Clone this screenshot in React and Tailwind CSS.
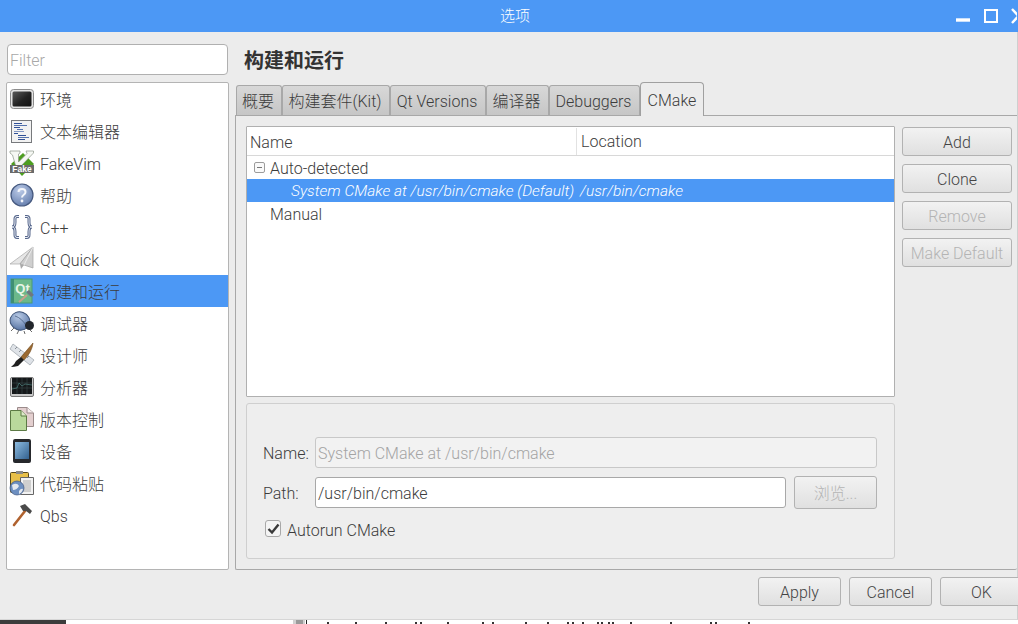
import React from "react";

function EnvIcon() {
  return (
    <svg width="26" height="26" viewBox="0 0 26 26">
      <defs>
        <linearGradient id="envScreen" x1="0" y1="0" x2="1" y2="1">
          <stop offset="0" stopColor="#5a5a5a" />
          <stop offset="0.55" stopColor="#222222" />
          <stop offset="1" stopColor="#111111" />
        </linearGradient>
      </defs>
      <rect x="1.5" y="3.5" width="23" height="19" rx="3" fill="#e4e4e4" stroke="#8c8c8c" />
      <rect x="3.5" y="5.5" width="19" height="15" rx="1.5" fill="url(#envScreen)" />
    </svg>
  );
}

function EditorIcon() {
  return (
    <svg width="26" height="26" viewBox="0 0 26 26">
      <rect x="2.5" y="2.5" width="20" height="22" fill="#f2f2f2" stroke="#77797c" />
      <g fill="#2f4f96">
        <rect x="5" y="5" width="8" height="1" />
        <rect x="5" y="7" width="13" height="1" fill="#5673ad" />
        <rect x="5" y="9" width="6" height="1" />
        <rect x="8" y="11" width="6" height="1" fill="#5673ad" />
        <rect x="5" y="13" width="10" height="1" fill="#8297c3" />
        <rect x="5" y="15" width="4" height="1" />
        <rect x="9" y="17" width="8" height="1" />
        <rect x="9" y="19" width="11" height="1" fill="#5673ad" />
        <rect x="9" y="21" width="7" height="1" />
      </g>
    </svg>
  );
}

function FakeVimIcon() {
  return (
    <svg width="26" height="26" viewBox="0 0 26 26">
      <path d="M14 3 L25 14 L13 26 L2 14Z" fill="#4d9e1f" />
      <path d="M1 1 H11 V3 L9.5 4 V12 L18 3.5 L17 1 H24.5 V3 L11 17 H7 L3.5 5 L1 3Z" fill="#f6f8f4" stroke="#8d968a" strokeWidth="0.7" />
      <rect x="1" y="15" width="24" height="8" fill="#6a6a6a" />
      <text x="13" y="22" textAnchor="middle" fontSize="8.5" fontWeight="700" fill="#ffffff" fontFamily="Liberation Sans, sans-serif">Fake</text>
    </svg>
  );
}

function HelpIcon() {
  return (
    <svg width="26" height="26" viewBox="0 0 26 26">
      <defs>
        <radialGradient id="helpBall" cx="0.4" cy="0.3" r="0.8">
          <stop offset="0" stopColor="#bccbe8" />
          <stop offset="1" stopColor="#5d77a8" />
        </radialGradient>
      </defs>
      <circle cx="13" cy="13" r="11" fill="url(#helpBall)" stroke="#46597f" strokeWidth="1.2" />
      <path d="M9.5 10 C9.5 6 16.5 6 16.5 10 C16.5 13 13 12.5 13 15.5" fill="none" stroke="#f4f6fb" strokeWidth="2" />
      <circle cx="13" cy="19" r="1.4" fill="#f4f6fb" />
    </svg>
  );
}

function CppIcon() {
  return (
    <svg width="26" height="26" viewBox="0 0 26 26" fill="none">
      <g stroke="#55658a" strokeWidth="3">
        <path d="M10 2.5 H8 C5.5 2.5 6 5 6 8 C6 11 5.5 13 3 13 C5.5 13 6 15 6 18 C6 21 5.5 23.5 8 23.5 H10" />
        <path d="M16 2.5 H18 C20.5 2.5 20 5 20 8 C20 11 20.5 13 23 13 C20.5 13 20 15 20 18 C20 21 20.5 23.5 18 23.5 H16" />
      </g>
      <g stroke="#e6ebf4" strokeWidth="1">
        <path d="M10 2.5 H8 C5.5 2.5 6 5 6 8 C6 11 5.5 13 3 13 C5.5 13 6 15 6 18 C6 21 5.5 23.5 8 23.5 H10" />
        <path d="M16 2.5 H18 C20.5 2.5 20 5 20 8 C20 11 20.5 13 23 13 C20.5 13 20 15 20 18 C20 21 20.5 23.5 18 23.5 H16" />
      </g>
    </svg>
  );
}

function QuickIcon() {
  return (
    <svg width="26" height="26" viewBox="0 0 26 26">
      <path d="M24 1 L1 18 L11 18Z" fill="#e6e6e6" stroke="#a8a8a8" strokeWidth="0.7" />
      <path d="M24 1 L11 18 L15 19 L24 22Z" fill="#cfcfcf" stroke="#a0a0a0" strokeWidth="0.7" />
      <path d="M11 18 L12 23 L15 19Z" fill="#a8a8a8" />
      <path d="M24 1 L15 19" stroke="#f4f4f4" strokeWidth="0.8" />
    </svg>
  );
}

function BuildIcon() {
  return (
    <svg width="26" height="26" viewBox="0 0 26 26">
      <rect x="2" y="1" width="21" height="24" fill="#6cb88a" stroke="#4a9a74" />
      <path d="M2 1 H5 V25 H2Z" fill="#3f8f73" />
      <text x="13.5" y="15" textAnchor="middle" fontSize="13" fontWeight="700" fill="#e8f5e6" fontFamily="Liberation Sans, sans-serif">Qt</text>
      <path d="M10 24 L18 17" stroke="#c8a08c" strokeWidth="2" />
      <path d="M17 14 L20 12 L25 17 L22 19Z" fill="#6f7780" />
    </svg>
  );
}

function DebugIcon() {
  return (
    <svg width="26" height="26" viewBox="0 0 26 26">
      <defs>
        <radialGradient id="bugBody" cx="0.35" cy="0.3" r="0.85">
          <stop offset="0" stopColor="#b9cbe6" />
          <stop offset="1" stopColor="#4c6a9c" />
        </radialGradient>
      </defs>
      <g stroke="#444444" strokeWidth="0.8">
        <path d="M5 18 L2 21 M10 20 L8 24 M15 21 L16 24 M20 19 L23 22" />
      </g>
      <ellipse cx="11" cy="11" rx="10" ry="9" fill="url(#bugBody)" stroke="#3c5276" transform="rotate(20 11 11)" />
      <path d="M6 6 Q13 8 18 17" fill="none" stroke="#3c5276" strokeWidth="0.7" />
      <circle cx="20.5" cy="15.5" r="4.5" fill="#22262c" />
    </svg>
  );
}

function DesignerIcon() {
  return (
    <svg width="26" height="26" viewBox="0 0 26 26">
      <path d="M4 2 L25 18 L21 23 L1 7Z" fill="#dfe3e8" stroke="#9aa0a8" strokeWidth="0.7" />
      <path d="M6 7 L8 5 M10 10 L12 8 M14 13 L16 11 M18 16 L20 14" stroke="#8a9098" />
      <path d="M24 1 L12 15 L15 18 Q23 10 24 1Z" fill="#9b6a32" stroke="#6f4618" strokeWidth="0.6" />
      <path d="M12 15 L15 18 L9 24 Q5 25 2 25 Q6 22 7 19Z" fill="#1f1f1f" />
    </svg>
  );
}

function AnalyzerIcon() {
  return (
    <svg width="26" height="26" viewBox="0 0 26 26">
      <rect x="1.5" y="3.5" width="23" height="19" rx="1.5" fill="#c8c8c8" stroke="#777777" />
      <rect x="3" y="4" width="20" height="16" fill="#15181a" />
      <path d="M8 4 V20 M13 4 V20 M18 4 V20 M3 9 H23 M3 14 H23" stroke="#3a4a4c" strokeWidth="0.6" />
      <path d="M3 15 L8 14 L10 9 L13 12 L16 10 L23 11" fill="none" stroke="#4f8280" strokeWidth="0.7" />
    </svg>
  );
}

function VersionIcon() {
  return (
    <svg width="26" height="26" viewBox="0 0 26 26">
      <path d="M8.5 1.5 H18 L24.5 7 V20.5 H8.5Z" fill="#e3cfcf" stroke="#9a8a8a" />
      <path d="M18 1.5 V7 H24.5" fill="#f5ecec" stroke="#9a8a8a" />
      <path d="M1.5 4.5 H12 L17.5 10 V24.5 H1.5Z" fill="#b9d99c" stroke="#5c7a45" />
      <path d="M12 4.5 V10 H17.5" fill="#dcebc9" stroke="#5c7a45" />
    </svg>
  );
}

function DeviceIcon() {
  return (
    <svg width="26" height="26" viewBox="0 0 26 26">
      <defs>
        <linearGradient id="devScreen" x1="0" y1="0" x2="1" y2="1">
          <stop offset="0" stopColor="#8dbbe0" />
          <stop offset="1" stopColor="#33618e" />
        </linearGradient>
      </defs>
      <rect x="4" y="1" width="18" height="24" rx="2" fill="#26282c" />
      <rect x="6" y="4" width="14" height="17" fill="url(#devScreen)" />
    </svg>
  );
}

function PasteIcon() {
  return (
    <svg width="26" height="26" viewBox="0 0 26 26">
      <rect x="1.5" y="2.5" width="18" height="20" rx="1" fill="#e8c04a" stroke="#57491c" />
      <rect x="7" y="1" width="7" height="3" fill="#8a8a8a" />
      <path d="M11.5 7.5 H24.5 V24.5 H11.5Z" fill="#f2f2f2" stroke="#666666" />
      <path d="M14 11 H22 M14 13 H22 M14 15 H22 M14 17 H22 M14 19 H22 M14 21 H22" stroke="#9a9a9a" strokeWidth="0.8" />
      <circle cx="8" cy="18" r="7" fill="#6d8fc0" stroke="#3f5680" strokeWidth="0.7" />
      <path d="M3 15 Q8 12 10 16 Q8 20 4 20Z M10 21 Q12 18 14 19 Q13 23 10 24Z" fill="#e4e8ee" />
    </svg>
  );
}

function QbsIcon() {
  return (
    <svg width="26" height="26" viewBox="0 0 26 26">
      <path d="M5 23 L16 9" stroke="#b0622f" strokeWidth="2.6" strokeLinecap="round" />
      <path d="M11 4 L16 2 L23 9 L21 12 L17 9 L14 9Z" fill="#4a4a4a" />
    </svg>
  );
}

const navItems = [
  { label: "环境", icon: EnvIcon },
  { label: "文本编辑器", icon: EditorIcon },
  { label: "FakeVim", icon: FakeVimIcon },
  { label: "帮助", icon: HelpIcon },
  { label: "C++", icon: CppIcon },
  { label: "Qt Quick", icon: QuickIcon },
  { label: "构建和运行", icon: BuildIcon, active: true },
  { label: "调试器", icon: DebugIcon },
  { label: "设计师", icon: DesignerIcon },
  { label: "分析器", icon: AnalyzerIcon },
  { label: "版本控制", icon: VersionIcon },
  { label: "设备", icon: DeviceIcon },
  { label: "代码粘贴", icon: PasteIcon },
  { label: "Qbs", icon: QbsIcon },
];

const tabs = [
  { label: "概要", width: "w-[46px]" },
  { label: "构建套件(Kit)", width: "w-[108px]" },
  { label: "Qt Versions", width: "w-[96px]" },
  { label: "编译器", width: "w-[63px]" },
  { label: "Debuggers", width: "w-[91px]" },
];

const terminalTicks = [327, 355, 385, 415, 420, 447, 482, 492, 525, 547, 567, 572, 582, 597, 601, 608, 612, 630, 670, 710, 715, 748];

function PushButton({ children, disabled, className = "" }) {
  return (
    <button
      className={`flex shrink-0 items-center justify-center rounded-[3px] border border-[#b2b2b2] bg-gradient-to-b from-[#f2f2f2] to-[#e0e0e0] text-base ${
        disabled ? "text-[#b4b4b4]" : "text-[#444444]"
      } ${className}`}
    >
      {children}
    </button>
  );
}

function App() {
  return (
    <div className="flex h-[624px] w-[1018px] flex-col overflow-hidden bg-white font-['Roboto','Noto_Sans_CJK_SC',sans-serif] text-base font-light text-[#3c3c3c]">
      <div className="flex h-8 shrink-0 items-center overflow-hidden bg-[#4c98f5] pr-[1px] text-white">
        <span className="pl-[500px] text-[15px]">选项</span>
        <div className="ml-auto flex items-center">
          <svg width="62" height="24" viewBox="0 0 62 24" fill="none" stroke="#ffffff" strokeWidth="2.4">
            <path d="M1 16 H15" strokeWidth="3.4" />
            <rect x="30" y="6" width="12" height="12" strokeWidth="2" />
            <path d="M57 5 L70 19 M70 5 L57 19" />
          </svg>
        </div>
      </div>

      <div className="flex h-[588px] shrink-0 flex-col border-r border-b border-r-[#cfcfcf] border-b-[#d6d6d6] bg-[#ececec]">
        <div className="flex h-[538px] shrink-0 pt-3">
          <div className="flex w-[229px] shrink-0 flex-col pl-[6px]">
            <div className="ml-[1px] flex h-[31px] w-[221px] items-center rounded-[4px] border border-[#b0b0b0] bg-white pt-[2px] pl-[2px] text-[#a8a8a8]">
              Filter
            </div>
            <div className="mt-[7px] h-[488px] rounded-[2px] border border-[#b4b4b4] bg-white">
              {navItems.map((item) => {
                const Icon = item.icon;
                return (
                  <div
                    key={item.label}
                    className={`flex h-8 items-center gap-[5px] pl-[2px] ${item.active ? "bg-[#4c98f5]" : ""}`}
                  >
                    <span className="flex h-[26px] w-[26px] items-center justify-center">
                      <Icon />
                    </span>
                    <span className="pt-[4px] leading-none">{item.label}</span>
                  </div>
                );
              })}
            </div>
          </div>

          <div className="ml-[6px] flex min-w-0 flex-1 flex-col">
            <div className="flex h-8 items-center pt-[2px] pl-[9px] text-xl font-bold text-[#333333]">构建和运行</div>
            <div className="mt-[6px] flex h-[33px] items-end pl-[1px]">
              {tabs.map((tab) => (
                <div
                  key={tab.label}
                  className={`flex h-[30px] ${tab.width} items-center justify-center rounded-t-[3px] border border-b-0 border-[#a8a8a8] bg-gradient-to-b from-[#d8d8d8] to-[#c6c6c6] pt-[2px] pr-[2px]`}
                >
                  {tab.label}
                </div>
              ))}
              <div className="relative z-10 -mb-[1px] flex h-[34px] w-[64px] items-center justify-center rounded-t-[4px] border border-b-0 border-[#a0a0a0] bg-[#ececec] pt-[2px]">
                CMake
              </div>
            </div>
            <div className="h-[455px] rounded-b-[2px] border border-r-0 border-[#a8a8a8] pt-[10px] pl-[10px]">
              <div className="flex">
                <div className="h-[271px] w-[649px] shrink-0 rounded-[1px] border border-[#b0b0b0] bg-white">
                  <div className="flex h-[29px] items-center border-b border-[#d8d8d8]">
                    <span className="w-[330px] border-r border-[#e2e2e2] pt-[2px] pl-[3px] leading-[25px]">Name</span>
                    <span className="pt-[2px] pl-[4px]">Location</span>
                  </div>
                  <div className="flex h-[23px] items-center pl-[7px]">
                    <svg width="12" height="12" viewBox="0 0 12 12" className="mr-[4px]">
                      <rect x="0.5" y="0.5" width="10" height="10" rx="1.5" fill="#fafafa" stroke="#9c9c9c" />
                      <path d="M3 5.5 H8" stroke="#777777" />
                    </svg>
                    <span className="pt-[2px] leading-[19px]">Auto-detected</span>
                  </div>
                  <div className="flex h-[23px] items-center bg-[#4c98f5] pt-[3px] text-[15.5px] text-white italic">
                    <span className="w-[333px] shrink-0 pl-[44px] whitespace-nowrap">System CMake at /usr/bin/cmake (Default)</span>
                    <span>/usr/bin/cmake</span>
                  </div>
                  <div className="flex h-[23px] items-center pt-[2px] pl-[23px]">Manual</div>
                </div>
                <div className="ml-[7px] flex flex-col gap-2 pt-[1px]">
                  <PushButton className="h-[29px] w-[110px] pt-[2px]">Add</PushButton>
                  <PushButton className="h-[29px] w-[110px] pt-[2px]">Clone</PushButton>
                  <PushButton disabled className="h-[29px] w-[110px] pt-[2px]">Remove</PushButton>
                  <PushButton disabled className="h-[29px] w-[110px] pt-[2px]">Make Default</PushButton>
                </div>
              </div>

              <div className="mt-[6px] h-[156px] w-[649px] rounded-[3px] border border-[#cfcfcf] bg-[#eeeeee] pt-[33px] pl-4">
                <div className="flex items-center">
                  <span className="w-[52px] pt-[2px]">Name:</span>
                  <div className="flex h-[31px] w-[562px] items-center rounded-[3px] border border-[#c8c8c8] bg-[#f2f2f2] pt-[2px] pl-[2px] text-[#a4a4a4]">
                    System CMake at /usr/bin/cmake
                  </div>
                </div>
                <div className="mt-2 flex items-center">
                  <span className="w-[52px] pt-[2px]">Path:</span>
                  <div className="flex h-[31px] w-[471px] items-center rounded-[3px] border border-[#a8a8a8] bg-white pt-[2px] pl-[2px]">
                    /usr/bin/cmake
                  </div>
                  <PushButton disabled className="ml-2 h-[33px] w-[83px] pt-[2px]">浏览...</PushButton>
                </div>
                <div className="mt-[4px] flex items-center pl-[2px]">
                  <span className="flex h-[17px] w-[16px] items-center justify-center rounded-[3px] border border-[#a8a8a8] bg-[#f4f4f4]">
                    <svg width="13" height="13" viewBox="0 0 13 13">
                      <path d="M1.5 7 L5 10.5 L11.5 2.5" fill="none" stroke="#3a3a3a" strokeWidth="2.4" />
                    </svg>
                  </span>
                  <span className="ml-[6px] pt-[6px]">Autorun CMake</span>
                </div>
              </div>
            </div>
          </div>
        </div>

        <div className="flex justify-end gap-2 pt-[7px]">
          <PushButton className="h-[29px] w-[83px] pt-[2px]">Apply</PushButton>
          <PushButton className="h-[29px] w-[83px] pt-[2px]">Cancel</PushButton>
          <PushButton className="-mr-[6px] h-[29px] w-[83px] pt-[2px]">OK</PushButton>
        </div>
      </div>

      <div className="flex h-1 shrink-0 bg-white">
        <div className="h-1 w-[66px] bg-[#3c3c3c]" />
        <div className="ml-[227px] flex h-1 w-3 justify-center bg-[#d0d0d0]">
          <div className="h-1 w-[7px] bg-[#9a9a9a]" />
        </div>
        <svg width="713" height="4" viewBox="305 0 713 4">
          <rect x="306" y="0" width="1" height="4" fill="#222222" />
          {terminalTicks.map((x) => (
            <rect key={x} x={x} y="2" width="2" height="2" fill="#333333" />
          ))}
        </svg>
      </div>
    </div>
  );
}

export default App;
